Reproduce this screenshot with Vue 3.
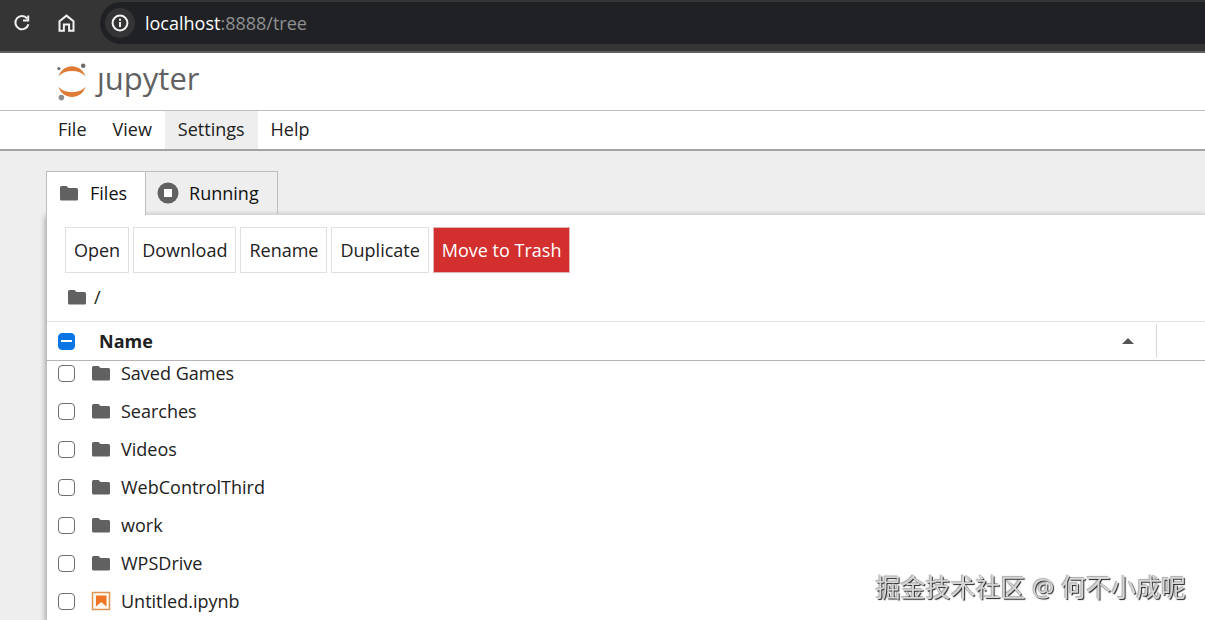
<template>
  <div class="page">
    <div class="browser-bar">
      <button class="bar-button" aria-label="Reload">
        <svg viewBox="0 0 20 20" width="20" height="20" fill="none" stroke="#f2f2f2" stroke-width="2">
          <path d="M15.2 5.600A6.600 6.600 0 1 0 16.400 11.200" />
          <path d="M16.200 2.400v5h-5.200" />
        </svg>
      </button>
      <button class="bar-button" aria-label="Home">
        <svg viewBox="0 0 20 20" width="20" height="20" fill="none" stroke="#f2f2f2" stroke-width="2">
          <path d="M3.500 8.200 10.500 2.600l7 5.600v9.600h-4.400v-6.200H7.900v6.200H3.500z" />
        </svg>
      </button>
      <div class="address">
        <button class="site-info" aria-label="Site information">
          <svg viewBox="0 0 20 20" width="20" height="20" fill="none" stroke="#f2f2f2" stroke-width="2">
            <circle cx="10" cy="10" r="7.4" />
            <path d="M10 9v5M10 5.8v2" />
          </svg>
        </button>
        <span class="url"><b>localhost</b>:8888/tree</span>
      </div>
    </div>

    <header class="header">
      <a class="logo" href="#" aria-label="jupyter">
        <svg viewBox="0 0 30 38" width="30" height="38">
          <path d="M1.4 13.4C4 6.6 9.2 3.2 15 3.2s11 3.4 13.6 10.2C25.2 9.6 20.4 8 15 8S4.8 9.6 1.4 13.4z" fill="#e07b35" />
          <path d="M1.4 23.800C4 31 9.2 34 15 34s11-3 13.6-10.200C25.2 27.600 20.4 29.200 15 29.200S4.8 27.600 1.4 23.800z" fill="#e07b35" />
          <circle cx="26.2" cy="2.8" r="2.3" fill="#6c6c6d" />
          <circle cx="1.9" cy="5.6" r="1.7" fill="#767677" />
          <circle cx="4.4" cy="34.6" r="2.8" fill="#8c8c8c" />
        </svg>
        <span class="wordmark">ȷupyter</span>
      </a>
    </header>

    <nav class="menu">
      <button
        v-for="item in menus"
        :key="item"
        class="menu-item"
        :class="{ active: item === 'Settings' }"
      >{{ item }}</button>
    </nav>

    <main class="content">
      <div class="tabs" role="tablist">
        <button class="tab current" role="tab" aria-selected="true">
          <svg class="folder" viewBox="0 0 20 16" width="20" height="16">
            <path :d="folderPath" />
          </svg>
          Files
        </button>
        <button class="tab" role="tab" aria-selected="false">
          <svg viewBox="0 0 22 22" width="22" height="22">
            <circle cx="11" cy="11" r="10.5" fill="#616161" />
            <rect x="7" y="7" width="8" height="8" fill="#fff" />
          </svg>
          Running
        </button>
      </div>

      <section class="panel">
        <div class="toolbar">
          <button v-for="action in actions" :key="action" class="action">{{ action }}</button>
          <button class="action danger">Move to Trash</button>
        </div>

        <div class="crumbs">
          <svg class="folder" viewBox="0 0 20 16" width="20" height="16">
            <path :d="folderPath" />
          </svg>
          <a href="#">/</a>
        </div>

        <table class="files">
          <thead>
            <tr>
              <th class="check">
                <input type="checkbox" aria-label="Select all" :indeterminate="true" />
              </th>
              <th class="name-head">
                Name
                <svg viewBox="0 0 12 6" width="12" height="6">
                  <path d="M0 6 6 0l6 6z" fill="#555" />
                </svg>
              </th>
              <th class="modified-head"></th>
            </tr>
          </thead>
          <tbody>
            <tr v-for="(file, index) in files" :key="file.name">
              <td class="check">
                <input :id="'file-' + index" type="checkbox" />
              </td>
              <td class="name">
                <svg v-if="file.type === 'notebook'" viewBox="0 0 20 20" width="20" height="20">
                  <rect x="1.5" y="1.5" width="17" height="17" fill="#fff8ef" stroke="#dd9455" stroke-width="1.5" />
                  <path d="M5 4.5h10.5v11L10.2 11 5 15.5z" fill="#ef7426" />
                </svg>
                <svg v-else class="folder" viewBox="0 0 20 16" width="20" height="16">
                  <path :d="folderPath" />
                </svg>
                <label :for="'file-' + index">{{ file.name }}</label>
              </td>
            </tr>
          </tbody>
        </table>
      </section>
    </main>

    <div class="watermark">掘金技术社区 @ 何不小成呢</div>
  </div>
</template>

<script setup>
const menus = ['File', 'View', 'Settings', 'Help']
const actions = ['Open', 'Download', 'Rename', 'Duplicate']

const files = [
  { name: 'Saved Games', type: 'folder' },
  { name: 'Searches', type: 'folder' },
  { name: 'Videos', type: 'folder' },
  { name: 'WebControlThird', type: 'folder' },
  { name: 'work', type: 'folder' },
  { name: 'WPSDrive', type: 'folder' },
  { name: 'Untitled.ipynb', type: 'notebook' }
]

const folderPath =
  'M2.5 1H7.5L9.5 3H17.5Q19 3 19 4.5V14Q19 15.500 17.500 15.500H2.500Q1 15.500 1 14V2.500Q1 1 2.500 1z'
</script>

<style>
body {
  margin: 0;
  background: #eee;
}
</style>

<style scoped>
.page {
  display: flex;
  flex-direction: column;
  height: 100vh;
  overflow: hidden;
  font-family: "Open Sans", "Noto Sans", sans-serif;
  font-size: 18px;
  line-height: 24px;
  color: #212121;
}

button {
  border: none;
  background: none;
  padding: 0;
  font: inherit;
  color: inherit;
  cursor: pointer;
}

a {
  color: inherit;
  text-decoration: none;
}

svg {
  flex: none;
  display: block;
}

.folder {
  fill: #616161;
}

.browser-bar {
  flex: none;
  display: flex;
  align-items: center;
  padding: 2px 0 7px 12px;
  background: #353535;
  border-bottom: 2px solid #616061;
}

.bar-button {
  margin-right: 24px;
}

.address {
  flex: 1;
  display: flex;
  align-items: center;
  gap: 10px;
  height: 42px;
  padding-left: 5px;
  border-radius: 21px 0 0 21px;
  background: #202124;
}

.site-info {
  display: flex;
  align-items: center;
  justify-content: center;
  width: 30px;
  height: 30px;
  border-radius: 50%;
  background: #343437;
}

.url {
  color: #8f9092;
}

.url b {
  font-weight: 400;
  color: #fff;
}

.header {
  flex: none;
  display: flex;
  height: 57px;
  background: #fff;
  border-bottom: 1px solid #bdbdbd;
}

.logo {
  display: flex;
  align-items: center;
  gap: 10px;
  padding-left: 57px;
}

.wordmark {
  padding-bottom: 8px;
  font-size: 31px;
  line-height: 40px;
  color: #616162;
}

.menu {
  flex: none;
  display: flex;
  height: 38px;
  padding-left: 45px;
  background: #fff;
  border-bottom: 2px solid #a3a3a3;
}

.menu-item {
  padding: 0 13px 2px;
}

.menu-item.active {
  background: #eee;
}

.content {
  flex: 1;
  display: flex;
  flex-direction: column;
  min-height: 0;
  padding: 20px 0 0 46px;
  background: #eee;
}

.tabs {
  position: relative;
  z-index: 1;
  display: flex;
}

.tab {
  display: flex;
  align-items: center;
  gap: 10px;
  height: 43px;
  padding: 0 18px 0 11px;
  border: 1px solid #bdbdbd;
  border-left: none;
  border-bottom: none;
  color: #111;
}

.tab.current {
  gap: 11px;
  height: 44px;
  margin-bottom: -1px;
  padding: 0 18px 2px 12px;
  border-left: 1px solid #bdbdbd;
  background: #fff;
}

.panel {
  flex: 1;
  border-top: 1px solid #d4d4d4;
  border-left: 1px solid #bdbdbd;
  background: #fff;
  box-shadow: 0 2px 6px rgba(0, 0, 0, 0.4);
}

.toolbar {
  display: flex;
  gap: 4px;
  padding: 12px 18px 0;
}

.action {
  height: 46px;
  padding: 0 8px;
  border: 1px solid #e0e0e0;
}

.action.danger {
  border-color: #e0b4b4;
  background: #d32f2f;
  color: #fff;
}

.crumbs {
  display: flex;
  align-items: center;
  gap: 7px;
  height: 48px;
  padding: 0 20px;
}

.files,
.files thead,
.files tbody {
  display: block;
}

.files tr {
  display: flex;
  align-items: center;
}

.files th,
.files td {
  padding: 0;
  text-align: left;
}

.files thead {
  position: relative;
  z-index: 1;
  background: #fff;
  border-top: 1px solid #e0e0e0;
  border-bottom: 1px solid #b5b5b5;
}

.files thead tr {
  height: 38px;
}

/* the list is scrolled a little way under its header */
.files tbody {
  margin-top: -7px;
}

.files tbody tr {
  height: 38px;
}

.files .check {
  display: flex;
  width: 44px;
  padding-left: 11px;
  box-sizing: border-box;
}

.check input {
  appearance: none;
  box-sizing: border-box;
  width: 17px;
  height: 17px;
  margin: 0;
  border: 1px solid #6e6e6e;
  border-radius: 4px;
  background: #fff;
}

.check input:checked {
  border-color: #0b75e6;
  background: #0b75e6;
}

.check input:indeterminate {
  border-color: #0b75e6;
  background: linear-gradient(#fff, #fff) center / 11px 2px no-repeat #0b75e6;
}

.files .name-head {
  flex: 1;
  display: flex;
  align-items: center;
  justify-content: space-between;
  height: 34px;
  padding: 0 22px 0 8px;
  border-right: 1px solid #d8d8d8;
  font-weight: 700;
}

.files .modified-head {
  width: 48px;
}

.files .name {
  display: flex;
  align-items: center;
  gap: 10px;
}

.watermark {
  position: fixed;
  right: 19px;
  bottom: 15px;
  font-family: "Open Sans", "Noto Sans CJK SC", sans-serif;
  font-size: 25px;
  line-height: 36px;
  color: #d6d6d6;
  text-shadow: 1px 1px 1px #222, -1px -1px 1px #aaa;
}
</style>
